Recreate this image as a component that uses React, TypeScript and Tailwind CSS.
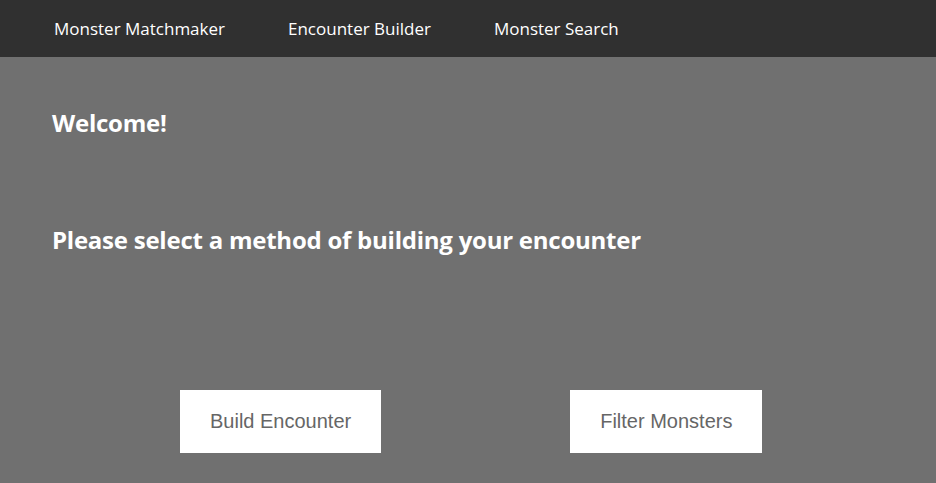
import React from "react";

const navLinks = ["Monster Matchmaker", "Encounter Builder", "Monster Search"];

export default function App() {
  return (
    <div className="min-h-screen bg-[#707070] font-['Open_Sans',sans-serif] text-white">
      {/* top nav */}
      <nav className="flex h-[57px] items-center gap-[63px] bg-[#303030] pl-[54px] text-[17px]">
        {navLinks.map((l) => (
          <a key={l} href="#" className="leading-none">
            {l}
          </a>
        ))}
      </nav>

      <main className="px-[52px]">
        <h2 className="pt-[50px] text-[24px] font-bold leading-[32px] tracking-[-0.01em]">Welcome!</h2>
        <h2 className="pt-[85px] text-[24px] font-bold leading-[32px] tracking-[-0.01em]">
          Please select a method of building your encounter
        </h2>
      </main>

      <div className="flex gap-[189px] pl-[180px] pt-[134px]">
        <button className="h-[63px] bg-white px-[30px] pb-[2px] font-['Liberation_Sans',Arial,sans-serif] text-[20px] text-[#666666]">
          Build Encounter
        </button>
        <button className="h-[63px] bg-white px-[30px] pb-[2px] font-['Liberation_Sans',Arial,sans-serif] text-[20px] text-[#666666]">
          Filter Monsters
        </button>
      </div>
    </div>
  );
}
